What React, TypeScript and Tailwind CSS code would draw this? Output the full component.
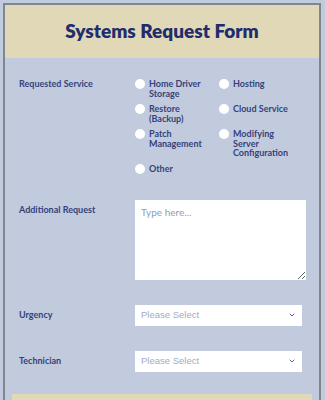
import { ChevronDown } from 'lucide-react';

const services = [
  'Home Driver Storage',
  'Hosting',
  'Restore (Backup)',
  'Cloud Service',
  'Patch Management',
  'Modifying Server Configuration',
  'Other',
];

function Radio({ label }: { label: string }) {
  return (
    <label className="flex items-start gap-[4px]">
      <span className="h-[10px] w-[10px] shrink-0 rounded-full bg-white" />
      <span className="max-w-[62px] text-[9px] font-bold leading-[9.5px] text-[#34427a]">{label}</span>
    </label>
  );
}

function Select() {
  return (
    <div className="flex h-[21px] w-[167px] items-center justify-between bg-white px-[6px]">
      <span className="text-[9.5px] text-[#a3acc0]" style={{ fontFamily: '"Liberation Sans", Arial, sans-serif' }}>
        Please Select
      </span>
      <ChevronDown className="h-[8px] w-[8px] text-[#5a6488]" strokeWidth={3} />
    </div>
  );
}

export default function App() {
  return (
    <div
      className="h-[400px] overflow-hidden bg-[#c1cbdd] pl-[3px] pr-[4px] pt-[3px]"
      style={{ fontFamily: 'Lato, "Open Sans", sans-serif' }}
    >
      <div className="border-x-2 border-t-2 border-[#808690]">
        {/* header */}
        <div className="flex h-[53px] items-center justify-center bg-[#e0d8b6]">
          <h1 className="text-[19px] font-extrabold text-[#1f2d6e]">Systems Request Form</h1>
        </div>

        {/* requested service */}
        <div className="flex pt-[21px]">
          <div className="w-[130px] pl-[14px] text-[9px] font-bold leading-[10px] text-[#34427a]">
            Requested Service
          </div>
          <div className="grid w-[170px] grid-cols-[84px_86px] gap-y-[6px]">
            {services.map((s) => (
              <Radio key={s} label={s} />
            ))}
          </div>
        </div>

        {/* additional request */}
        <div className="flex pt-[26px]">
          <div className="w-[130px] pl-[14px] pt-[5px] text-[9px] font-bold leading-[10px] text-[#34427a]">
            Additional Request
          </div>
          <textarea
            placeholder="Type here..."
            className="h-[80px] w-[171px] resize-y bg-white px-[6px] py-[5px] text-[10px] text-[#34427a] outline-none placeholder:text-[#8e9bbb]"
          />
        </div>

        {/* urgency */}
        <div className="flex items-center pt-[25px]">
          <div className="w-[130px] pl-[14px] text-[9px] font-bold leading-[10px] text-[#34427a]">Urgency</div>
          <Select />
        </div>

        {/* technician */}
        <div className="flex items-center pt-[25px]">
          <div className="w-[130px] pl-[14px] text-[9px] font-bold leading-[10px] text-[#34427a]">Technician</div>
          <Select />
        </div>

        <div className="mx-[7px] mt-[22px] h-[40px] bg-[#e0d8b6]" />
      </div>
    </div>
  );
}
